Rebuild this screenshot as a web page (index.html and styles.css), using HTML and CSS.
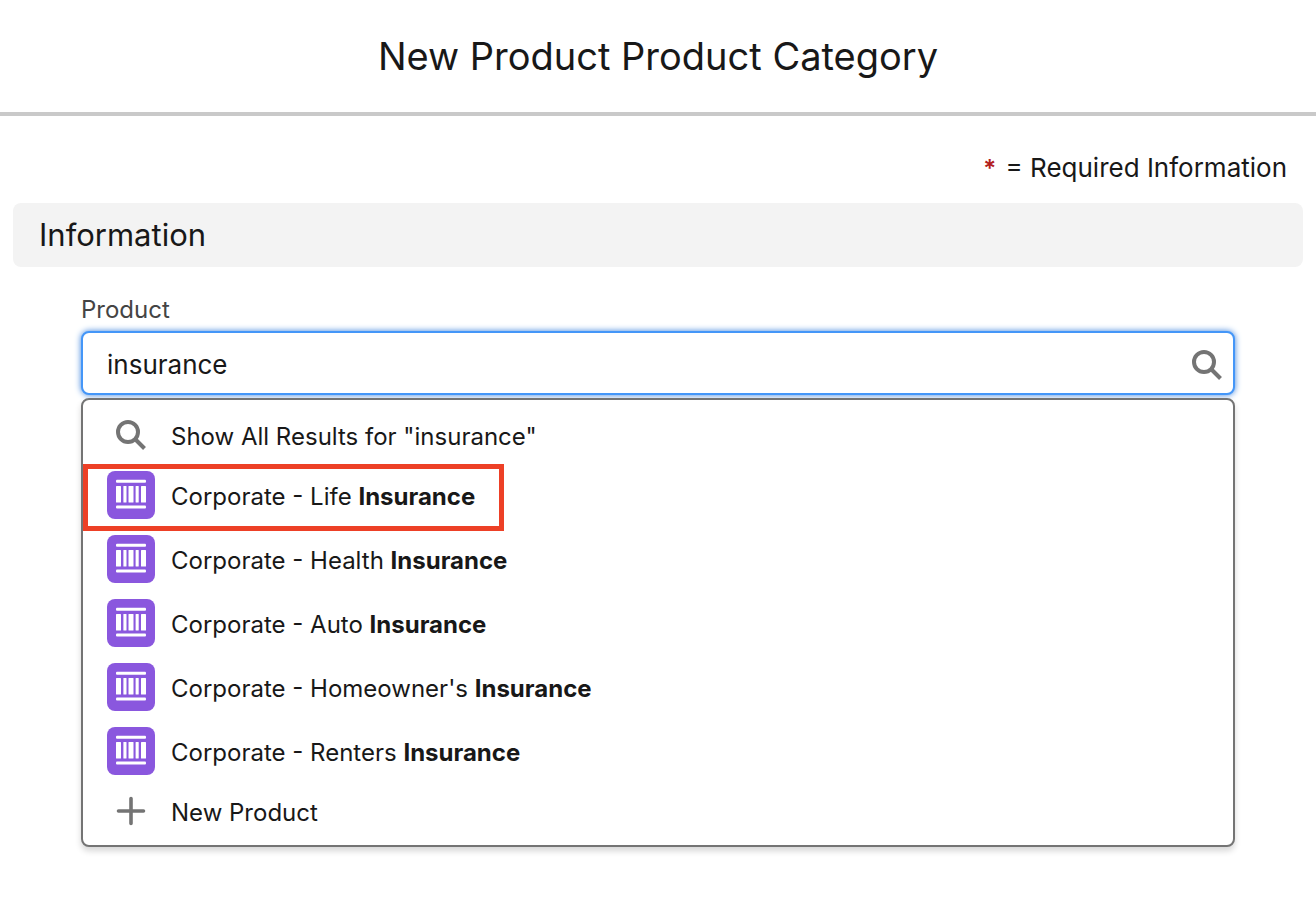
FILE: index.html
```html
<!DOCTYPE html>
<html lang="en">
<head>
  <meta charset="UTF-8">
  <meta name="viewport" content="width=device-width, initial-scale=1.0">
  <title>New Product Product Category</title>
  <link rel="stylesheet" href="styles.css">
</head>
<body>
  <svg class="defs" aria-hidden="true">
    <symbol id="search" viewBox="0 0 32 32">
      <circle cx="13" cy="13" r="10" fill="none" stroke="currentColor" stroke-width="4"/>
      <path d="M20 20L29.5 29.5" stroke="currentColor" stroke-width="4"/>
    </symbol>
    <symbol id="plus" viewBox="0 0 32 32">
      <path d="M16 3.5V28.5M3.5 16H28.5" stroke="currentColor" stroke-width="3.6" stroke-linecap="round"/>
    </symbol>
    <symbol id="product" viewBox="0 0 48 48">
      <g fill="#fff">
        <rect x="9" y="8.8" width="30" height="3" rx="1"/>
        <rect x="9" y="15" width="5" height="16.6" rx=".5"/>
        <rect x="16.4" y="15" width="3.1" height="16.6" rx=".5"/>
        <rect x="21.5" y="15" width="5" height="16.6" rx=".5"/>
        <rect x="28.6" y="15" width="3.1" height="16.6" rx=".5"/>
        <rect x="34" y="15" width="5" height="16.6" rx=".5"/>
        <rect x="9" y="34.5" width="30" height="3" rx="1"/>
      </g>
    </symbol>
  </svg>

  <header class="header">
    <h1>New Product Product Category</h1>
  </header>

  <form class="form">
    <p class="legend"><abbr>*</abbr> = Required Information</p>
    <h2 class="section-title">Information</h2>

    <div class="field">
      <label for="product-input">Product</label>
      <div class="combobox">
        <input id="product-input" type="text" value="insurance" autocomplete="off">
        <svg class="input-icon"><use href="#search"/></svg>

        <ul class="dropdown">
          <li><button type="button" class="option action">
            <span class="icon"><svg><use href="#search"/></svg></span>
            <span class="text">Show All Results for "insurance"</span>
          </button></li>
          <li class="highlight"><button type="button" class="option">
            <span class="icon product"><svg><use href="#product"/></svg></span>
            <span class="text">Corporate - Life <b>Insurance</b></span>
          </button></li>
          <li><button type="button" class="option">
            <span class="icon product"><svg><use href="#product"/></svg></span>
            <span class="text">Corporate - Health <b>Insurance</b></span>
          </button></li>
          <li><button type="button" class="option">
            <span class="icon product"><svg><use href="#product"/></svg></span>
            <span class="text">Corporate - Auto <b>Insurance</b></span>
          </button></li>
          <li><button type="button" class="option">
            <span class="icon product"><svg><use href="#product"/></svg></span>
            <span class="text">Corporate - Homeowner's <b>Insurance</b></span>
          </button></li>
          <li><button type="button" class="option">
            <span class="icon product"><svg><use href="#product"/></svg></span>
            <span class="text">Corporate - Renters <b>Insurance</b></span>
          </button></li>
          <li><button type="button" class="option action">
            <span class="icon"><svg><use href="#plus"/></svg></span>
            <span class="text">New Product</span>
          </button></li>
        </ul>
      </div>
    </div>
  </form>
</body>
</html>
```

FILE: styles.css
```css
*{
  margin:0;
  padding:0;
  box-sizing:border-box;
}
body{
  min-height:100vh;
  font-family:Inter, "Liberation Sans", sans-serif;
  color:#181818;
  background-color:#fff;
}
.defs{
  display:none;
}
.header{
  padding:32px 24px;
  border-bottom:4px solid #c9c9c9;
  text-align:center;
}
.header h1{
  font-size:38px;
  line-height:48px;
  font-weight:400;
}
.form{
  padding:32px 13px;
}
.legend{
  padding-right:16px;
  font-size:26px;
  line-height:40px;
  text-align:right;
}
.legend abbr{
  margin-right:2px;
  font-size:24px;
  line-height:1;
  font-weight:600;
  color:#b3201c;
}
.section-title{
  margin-top:15px;
  padding:1px 26px;
  border-radius:8px;
  background-color:#f3f3f3;
  font-size:31px;
  line-height:62px;
  font-weight:400;
}
.field{
  padding:24px 68px;
}
.field label{
  display:block;
  padding-bottom:2px;
  font-size:24px;
  line-height:38px;
  color:#444;
}
.combobox{
  position:relative;
}
.combobox input{
  display:block;
  width:100%;
  height:64px;
  padding:2px 64px 0 24px;
  border:2px solid #4496f8;
  border-radius:8px;
  outline:none;
  box-shadow:0 0 6px #3c82dc;
  background-color:#fff;
  font-family:inherit;
  font-size:26px;
  color:#181818;
}
.input-icon{
  position:absolute;
  top:18px;
  right:12px;
  width:32px;
  height:32px;
  color:#747474;
}
.dropdown{
  position:absolute;
  top:67px;
  left:0;
  right:0;
  padding:7px 0 6px;
  border:2px solid #747474;
  border-radius:8px;
  box-shadow:0 4px 6px rgba(0,0,0,.16);
  background-color:#fff;
  list-style:none;
}
.option{
  display:flex;
  align-items:center;
  gap:16px;
  width:100%;
  height:64px;
  padding:0 24px;
  border:none;
  background:none;
  font-family:inherit;
  font-size:24px;
  line-height:32px;
  color:inherit;
  text-align:left;
  cursor:pointer;
}
.option.action{
  height:56px;
}
.option:hover{
  background-color:#f3f3f3;
}
.text{
  padding-top:4px;
}
.icon{
  display:flex;
  align-items:center;
  justify-content:center;
  width:48px;
  height:48px;
  border-radius:8px;
  color:#747474;
}
.icon svg{
  width:32px;
  height:32px;
}
.icon.product{
  background-color:#8a57de;
}
.icon.product svg{
  width:48px;
  height:48px;
}
/* red frame around the chosen result */
.highlight{
  position:relative;
}
.highlight::after{
  content:"";
  position:absolute;
  top:1px;
  left:0;
  box-sizing:border-box;
  width:421px;
  height:67px;
  border:5px solid #ed4026;
  pointer-events:none;
}
```
